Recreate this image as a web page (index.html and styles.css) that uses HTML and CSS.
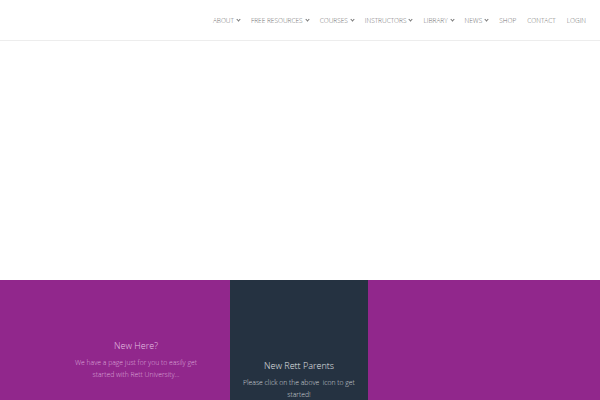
FILE: index.html
```html
<!DOCTYPE html>
<html>
<head>
<meta charset="utf-8">
<link rel="stylesheet" href="styles.css">
</head>
<body>
<header class="header">
  <nav class="nav">
    <a class="item">ABOUT<span class="chev"></span></a>
    <a class="item">FREE RESOURCES<span class="chev"></span></a>
    <a class="item">COURSES<span class="chev"></span></a>
    <a class="item">INSTRUCTORS<span class="chev"></span></a>
    <a class="item">LIBRARY<span class="chev"></span></a>
    <a class="item">NEWS<span class="chev"></span></a>
    <a class="item">SHOP</a>
    <a class="item">CONTACT</a>
    <a class="item">LOGIN</a>
  </nav>
</header>
<main class="hero"></main>
<section class="band">
  <div class="col col-left">
    <h3 class="title">New Here?</h3>
    <p class="text">We have a page just for you to easily get started with Rett University...</p>
  </div>
  <div class="col col-mid">
    <h3 class="title">New Rett Parents</h3>
    <p class="text">Please click on the above &nbsp;icon to get started!</p>
  </div>
  <div class="col col-right"></div>
</section>
</body>
</html>
```
FILE: styles.css
```css
html, body {
  margin: 0;
  padding: 0;
  width: 600px;
  height: 400px;
  overflow: hidden;
  background: #fff;
  font-family: "Open Sans", "Liberation Sans", sans-serif;
}
.header {
  height: 41px;
  border-bottom: 1px solid #ededed;
  box-sizing: border-box;
  display: flex;
  justify-content: flex-end;
  align-items: center;
  padding-right: 14px;
}
.nav {
  display: flex;
  gap: 11px;
  align-items: center;
}
.item {
  font-size: 6.5px;
  font-weight: 300;
  color: #6f6f6f;
  display: flex;
  align-items: center;
  white-space: nowrap;
}
.chev {
  display: inline-block;
  width: 2px;
  height: 2px;
  border-right: 1px solid #777;
  border-bottom: 1px solid #777;
  transform: rotate(45deg);
  margin-left: 3px;
  margin-top: -2px;
}
.hero {
  height: 239px;
}
.band {
  height: 120px;
  display: flex;
  background: #91278c;
}
.col {
  box-sizing: border-box;
  text-align: center;
}
.col-left {
  width: 230px;
  padding: 59px 29px 0 71px;
  color: #dba9d8;
}
.col-mid {
  width: 138px;
  background: #253241;
  padding: 79px 6px 0;
  color: #cfd3d8;
}
.col-right {
  flex: 1;
}
.title {
  margin: 0;
  font-size: 9px;
  font-weight: 300;
  line-height: 13px;
}
.col-left .title { color: #e6c3e4; }
.col-mid .title { color: #e2e5e8; }
.text {
  margin: 5px 0 0;
  font-size: 6.8px;
  font-weight: 300;
  line-height: 12px;
}
```
